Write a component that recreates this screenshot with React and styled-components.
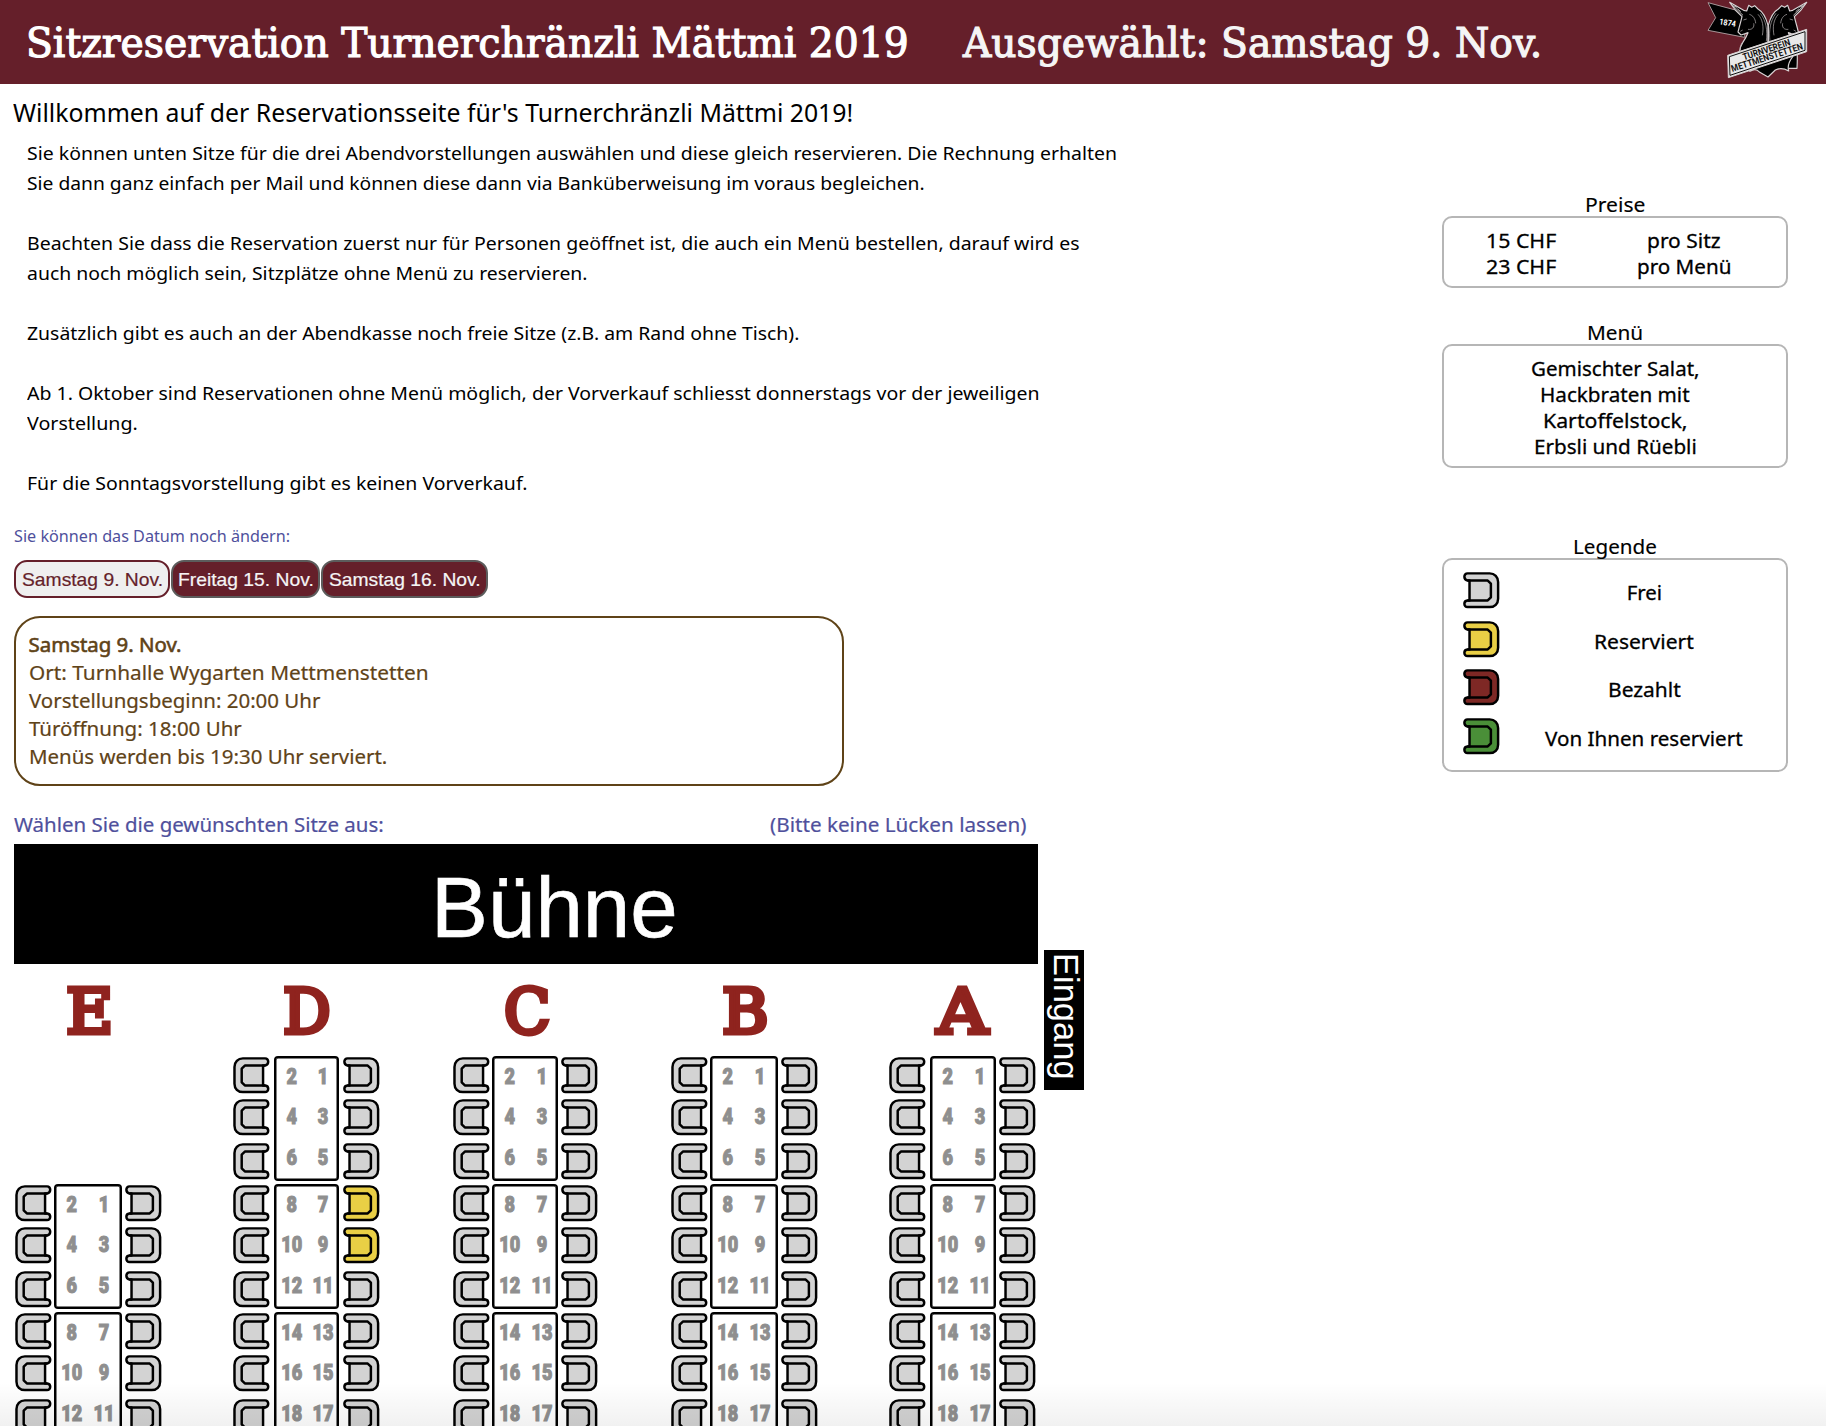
import React, { useLayoutEffect, useRef, useState } from 'react';
import styled, { createGlobalStyle } from 'styled-components';

const UI = '"Noto Sans", "Open Sans", sans-serif';
const SLAB = '"DejaVu Serif Condensed", "DejaVu Serif", serif';
const ARIAL = '"Liberation Sans", Arial, sans-serif';

const GlobalStyle = createGlobalStyle`
  *, *::before, *::after { box-sizing: border-box; }
  html, body { margin: 0; padding: 0; background: #fff; }
  body { font-family: ${UI}; color: #000; overflow: hidden; }
`;

/* ---------- text that fills a given width ---------- */

const FitBox = styled.span`
  display: inline-block;
  width: ${(p) => p.$w}px;
  white-space: nowrap;
  text-align: left;
  vertical-align: top;
`;

const FitInner = styled.span`
  display: inline-block;
  transform-origin: 0 50%;
`;

function Fit({ w, children }) {
  const ref = useRef(null);
  const [scale, setScale] = useState(1);
  useLayoutEffect(() => {
    const natural = ref.current.offsetWidth;
    if (natural) setScale(w / natural);
  }, [w]);
  return (
    <FitBox $w={w}>
      <FitInner ref={ref} style={{ transform: `scaleX(${scale})` }}>{children}</FitInner>
    </FitBox>
  );
}

/* ---------- page ---------- */

const Page = styled.div`
  position: relative;
  width: 1826px;
  height: 1426px;
  overflow: hidden;
  background: #fff;
`;

const BottomShade = styled.div`
  position: absolute;
  left: 0;
  right: 0;
  bottom: 0;
  height: 44px;
  background: linear-gradient(to bottom, rgba(0, 0, 0, 0), rgba(0, 0, 0, 0.055));
  pointer-events: none;
`;

const Header = styled.header`
  display: flex;
  align-items: flex-start;
  height: 84px;
  padding: 0 17px 0 26px;
  background: #651f2a;
  color: #fff;
`;

const Title = styled.h1`
  margin: 0;
  font: 400 41.4px/87px ${SLAB};
  -webkit-text-stroke: 1.1px currentColor;
`;

const Selected = styled(Title).attrs({ as: 'h2' })`
  margin-left: 54px;
  color: #f5f5f5;
`;

const LogoSlot = styled.div`
  margin-left: auto;
  height: 80px;
  line-height: 0;
`;

const Main = styled.main`
  display: flex;
  padding-left: 14px;
`;

const Content = styled.div`
  width: 1428px;
  padding-top: 10px;
`;

const Headline = styled.h2`
  margin: 0 0 0 -1px;
  font: 400 25px/36px ${UI};
`;

const Intro = styled.div`
  margin: 8px 0 0 12.5px;
  font-size: 18.8px;
  line-height: 30px;
`;

const Paragraph = styled.div`
  display: flex;
  flex-direction: column;
  & + & { margin-top: 30px; }
`;

const DateHint = styled.div`
  margin: 26px 0 0 -0.5px;
  font-size: 16px;
  line-height: 24px;
  color: #4f509c;
`;

const DateButtons = styled.div`
  display: flex;
  gap: 1px;
  margin-top: 12px;
`;

const DateButton = styled.button`
  width: ${(p) => p.$width}px;
  height: 38px;
  padding: 0;
  border: 2px solid ${(p) => (p.$active ? '#651f2a' : '#5c5c5c')};
  border-radius: 13px;
  background: ${(p) => (p.$active ? '#efefef' : '#651f2a')};
  color: ${(p) => (p.$active ? '#651f2a' : '#f5f5f5')};
  font: 400 19px/35px ${ARIAL};
  -webkit-text-stroke: 0.2px currentColor;
`;

const InfoBox = styled.section`
  display: flex;
  flex-direction: column;
  width: 830px;
  height: 170px;
  margin-top: 18px;
  padding: 12px 0 0 12.5px;
  border: 2px solid #5f4318;
  border-radius: 26px;
  color: #5f4318;
  font-size: 20.4px;
  line-height: 28px;
`;

const InfoLine = styled.span`
  -webkit-text-stroke: ${(p) => (p.$strong ? 0.6 : 0.2)}px currentColor;
`;

const SeatHint = styled.div`
  display: flex;
  justify-content: space-between;
  width: 1013px;
  margin: 24px 0 0 -0.5px;
  font-size: 20.2px;
  line-height: 28px;
  color: #4f509c;
  -webkit-text-stroke: 0.2px currentColor;
`;

/* ---------- hall ---------- */

const HallRow = styled.div`
  display: flex;
  align-items: flex-start;
  margin-top: 6px;
`;

const Hall = styled.div`
  width: 1024px;
`;

const Stage = styled.div`
  height: 120px;
  padding-left: 417px;
  background: #000;
  color: #fff;
  font: 400 85px/128px ${ARIAL};
  -webkit-text-stroke: 0.6px currentColor;
`;

const Entrance = styled.div`
  width: 40px;
  height: 140px;
  margin: 106px 0 0 6px;
  padding-top: 3px;
  background: #000;
  color: #fff;
  writing-mode: vertical-rl;
  font: 400 34.5px/37px ${ARIAL};
`;

const Columns = styled.div`
  display: grid;
  grid-template-columns: 219.3px 220.2px 218px 217.5px 149px;
`;

const Column = styled.div`
  width: 146px;
  margin-left: ${(p) => p.$inset || 0}px;
`;

const ColumnLetter = styled.div`
  height: 92px;
  margin-bottom: ${(p) => (p.$short ? 128 : 0)}px;
  padding-left: 2px;
  text-align: center;
  color: #8f231e;
  font: 400 62px/95px "DejaVu Serif", serif;
  -webkit-text-stroke: 4.8px currentColor;
`;

const Block = styled.div`
  display: grid;
  grid-template-columns: 36.6px ${(p) => p.$table}px 36.6px;
  column-gap: 0;
  height: 124px;
  margin-bottom: 4px;
`;

const SeatStack = styled.div`
  display: grid;
  grid-template-rows: 42px 44px 37px;
  padding-top: 1px;
  transform: ${(p) => (p.$flip ? 'scaleX(-1)' : 'none')};
`;

const Table = styled.div`
  display: grid;
  grid-template-columns: 31.5px 32px;
  grid-auto-rows: 40.3px;
  margin: 0 ${(p) => p.$gapRight}px 0 ${(p) => p.$gapLeft}px;
  border: 2px solid #000;
  border-radius: 4px;
  background: #fff;
  box-shadow: inset 0 0 0 0.5px #000;
`;

const SeatNumber = styled.div`
  display: flex;
  justify-content: center;
  line-height: 38px;
  font-family: Roboto, sans-serif;
  font-weight: 900;
  font-size: 22.6px;
  color: #8f8f8f;
  -webkit-text-stroke: 1.1px currentColor;
  transform: scaleX(0.8);
`;

const SeatSvg = styled.svg`
  display: block;
  width: 36.6px;
  height: 36.6px;
  overflow: visible;
`;

function Seat({ color = '#d3d3d3' }) {
  return (
    <SeatSvg viewBox="0 0 37 37" fill="none" stroke="#000" strokeWidth="2.5" strokeLinejoin="round">
      <path
        fill={color}
        d="M4.6 1.4H27C32 1.4 35.5 5 35.5 10V27C35.5 32 32 35.5 27 35.5H4.6C2.6 35.5 1.4 34.1 1.4 32.2C1.4 30.4 2.6 29 4.4 28.8H6.6V8.5H4.4C2.6 8.2 1.4 6.8 1.4 4.9C1.4 2.9 2.6 1.4 4.6 1.4Z"
      />
      <path d="M4.4 8.7H25L28.2 11.8V25.6L25 28.8H4.4" />
    </SeatSvg>
  );
}

const YELLOW = '#e9cf45';

const COLUMNS = [
  { id: 'E', letter: 47, inset: 1.3, short: true, table: 73, gl: 2.5, gr: 3 },
  { id: 'D', letter: 48, table: 72.7, gl: 4, gr: 3.2, reserved: [7, 9] },
  { id: 'C', letter: 46, table: 71, gl: 2.2, gr: 3.4 },
  { id: 'B', letter: 47, table: 73, gl: 2.4, gr: 3.4 },
  { id: 'A', letter: 51, table: 73.4, gl: 4.6, gr: 3.4 },
];

function SeatBlock({ col, first }) {
  const rows = [first, first + 2, first + 4];
  return (
    <Block $table={col.table}>
      <SeatStack $flip>
        {rows.map((n) => <Seat key={n} />)}
      </SeatStack>
      <Table $gapLeft={col.gl} $gapRight={col.gr}>
        {rows.map((n) => (
          <React.Fragment key={n}>
            <SeatNumber>{n + 1}</SeatNumber>
            <SeatNumber>{n}</SeatNumber>
          </React.Fragment>
        ))}
      </Table>
      <SeatStack>
        {rows.map((n) => (
          <Seat key={n} color={(col.reserved || []).includes(n) ? YELLOW : undefined} />
        ))}
      </SeatStack>
    </Block>
  );
}

/* ---------- sidebar ---------- */

const Sidebar = styled.aside`
  width: 346px;
  padding-top: 108px;
`;

const CardTitle = styled.div`
  margin-top: ${(p) => p.$space || 0}px;
  text-align: center;
  font-size: 20.4px;
  line-height: 24px;
  -webkit-text-stroke: 0.15px currentColor;
`;

const Card = styled.div`
  height: ${(p) => p.$height}px;
  padding-top: 9px;
  border: 2px solid #b6b6b6;
  border-radius: 10px;
  font-size: 20.4px;
  line-height: 26px;
  text-align: center;
  -webkit-text-stroke: 0.3px currentColor;
`;

const PriceRow = styled.div`
  display: grid;
  grid-template-columns: 154px 172px;
`;

const MenuLine = styled.div`
  height: 26px;
`;

const LegendRow = styled.div`
  display: grid;
  grid-template-columns: 37px 1fr;
  column-gap: 3px;
  height: 48.6px;
  padding: 3px 0 0 18.5px;
  line-height: 40px;
`;

const LEGEND = [
  ['Frei', '#d3d3d3', 35],
  ['Reserviert', YELLOW, 100],
  ['Bezahlt', '#7e2825', 73],
  ['Von Ihnen reserviert', '#4a8f38', 198],
];

/* ---------- logo ---------- */

function Unicorn() {
  return (
    <g>
      <path
        d="M121 7L163 31L172 33L178 16L187 22L196 17L206 27C222 36 230 52 236 76V205H150C148 168 148 145 160 128C168 116 172 108 176 98L168 101L155 105L146 96L149 84L155 62L158 50L138 30Z"
        fill="#000" stroke="#d9d3d4" strokeWidth="3.5" strokeLinejoin="round"
      />
      <path d="M122 9L161 46M132 17L143 22M144 26L154 35" stroke="#d9d3d4" strokeWidth="2.5" />
      <path d="M180 43C190 46 198 55 199 70M206 43C220 58 224 80 219 106M213 40C230 62 235 90 231 124M176 88C188 90 196 82 193 70M158 128C154 135 153 142 153 150M162 60L172 57M153 94L160 90" fill="none" stroke="#bdb7b8" strokeWidth="2" />
    </g>
  );
}

function Logo() {
  return (
    <svg width="102.7" height="80" viewBox="50 0 308 240">
      <path d="M56 8L168 38L166 112L56 91L79 53Z" fill="#000" stroke="#b9aeb0" strokeWidth="2.5" />
      <text x="115" y="77" textAnchor="middle" transform="rotate(9 115 68)" fontFamily="Roboto, sans-serif" fontWeight="700" fontSize="25" fill="#fff" textLength="50" lengthAdjust="spacingAndGlyphs">1874</text>
      <Unicorn />
      <g transform="translate(473 0) scale(-1 1)"><Unicorn /></g>
      <path d="M226 40L236 62L246 40L238 28H233Z" fill="#651f2a" />
      <path d="M168 196L182 214C194 206 204 208 210 216L236 231L258 210C270 204 286 206 298 213C294 200 298 186 310 170L300 130Z" fill="#000" stroke="#d9d3d4" strokeWidth="3.5" strokeLinejoin="round" />
      <path d="M115 166L352 88V155L117 233Z" fill="#e9e9e9" stroke="#d9d3d4" strokeWidth="3" />
      <path d="M120 170L347 95V151L122 226Z" fill="#e9e9e9" stroke="#111" strokeWidth="3" />
      <g fontFamily="Roboto, sans-serif" fontWeight="700" fill="#111">
        <text transform="translate(164 181) rotate(-18)" fontSize="28" textLength="148" lengthAdjust="spacingAndGlyphs">TURNVEREIN</text>
        <text transform="translate(129 216) rotate(-18)" fontSize="28" textLength="224" lengthAdjust="spacingAndGlyphs">METTMENSTETTEN</text>
      </g>
    </svg>
  );
}

/* ---------- texts ---------- */

const INTRO = [
  [
    ['Sie können unten Sitze für die drei Abendvorstellungen auswählen und diese gleich reservieren. Die Rechnung erhalten', 1090],
    ['Sie dann ganz einfach per Mail und können diese dann via Banküberweisung im voraus begleichen.', 898],
  ],
  [
    ['Beachten Sie dass die Reservation zuerst nur für Personen geöffnet ist, die auch ein Menü bestellen, darauf wird es', 1053],
    ['auch noch möglich sein, Sitzplätze ohne Menü zu reservieren.', 561],
  ],
  [['Zusätzlich gibt es auch an der Abendkasse noch freie Sitze (z.B. am Rand ohne Tisch).', 772]],
  [
    ['Ab 1. Oktober sind Reservationen ohne Menü möglich, der Vorverkauf schliesst donnerstags vor der jeweiligen', 1012],
    ['Vorstellung.', 111],
  ],
  [['Für die Sonntagsvorstellung gibt es keinen Vorverkauf.', 500]],
];

const INFO = [
  ['Samstag 9. Nov.', 153],
  ['Ort: Turnhalle Wygarten Mettmenstetten', 400],
  ['Vorstellungsbeginn: 20:00 Uhr', 291],
  ['Türöffnung: 18:00 Uhr', 213],
  ['Menüs werden bis 19:30 Uhr serviert.', 358],
];

const MENU = [
  ['Gemischter Salat,', 169],
  ['Hackbraten mit', 150],
  ['Kartoffelstock,', 145],
  ['Erbsli und Rüebli', 163],
];

export default function App() {
  return (
    <Page>
      <GlobalStyle />
      <Header>
        <Title><Fit w={883}>Sitzreservation Turnerchränzli Mättmi 2019</Fit></Title>
        <Selected><Fit w={579}>Ausgewählt: Samstag 9. Nov.</Fit></Selected>
        <LogoSlot><Logo /></LogoSlot>
      </Header>
      <Main>
        <Content>
          <Headline><Fit w={840}>Willkommen auf der Reservationsseite für's Turnerchränzli Mättmi 2019!</Fit></Headline>
          <Intro>
            {INTRO.map((lines, i) => (
              <Paragraph key={i}>
                {lines.map(([text, w]) => <Fit key={text} w={w}>{text}</Fit>)}
              </Paragraph>
            ))}
          </Intro>
          <DateHint><Fit w={276}>Sie können das Datum noch ändern:</Fit></DateHint>
          <DateButtons>
            <DateButton $active $width={156}><Fit w={141}>Samstag 9. Nov.</Fit></DateButton>
            <DateButton $width={149}><Fit w={136}>Freitag 15. Nov.</Fit></DateButton>
            <DateButton $width={167}><Fit w={152}>Samstag 16. Nov.</Fit></DateButton>
          </DateButtons>
          <InfoBox>
            {INFO.map(([text, w], i) => (
              <InfoLine key={text} $strong={i === 0}><Fit w={w}>{text}</Fit></InfoLine>
            ))}
          </InfoBox>
          <SeatHint>
            <Fit w={370}>Wählen Sie die gewünschten Sitze aus:</Fit>
            <Fit w={257}>(Bitte keine Lücken lassen)</Fit>
          </SeatHint>
          <HallRow>
            <Hall>
              <Stage><Fit w={247}>Bühne</Fit></Stage>
              <Columns>
                {COLUMNS.map((col) => (
                  <Column key={col.id} $inset={col.inset}>
                    <ColumnLetter $short={col.short}><Fit w={col.letter}>{col.id}</Fit></ColumnLetter>
                    {(col.short ? [1, 7] : [1, 7, 13]).map((n) => (
                      <SeatBlock key={n} col={col} first={n} />
                    ))}
                  </Column>
                ))}
              </Columns>
            </Hall>
            <Entrance>Eingang</Entrance>
          </HallRow>
        </Content>
        <Sidebar>
          <CardTitle><Fit w={60}>Preise</Fit></CardTitle>
          <Card $height={72}>
            <PriceRow>
              <span><Fit w={70}>15 CHF</Fit></span>
              <span><Fit w={74}>pro Sitz</Fit></span>
            </PriceRow>
            <PriceRow>
              <span><Fit w={70}>23 CHF</Fit></span>
              <span><Fit w={94}>pro Menü</Fit></span>
            </PriceRow>
          </Card>
          <CardTitle $space={32}><Fit w={56}>Menü</Fit></CardTitle>
          <Card $height={124}>
            {MENU.map(([text, w]) => <MenuLine key={text}><Fit w={w}>{text}</Fit></MenuLine>)}
          </Card>
          <CardTitle $space={66}><Fit w={84}>Legende</Fit></CardTitle>
          <Card $height={214}>
            {LEGEND.map(([text, color, w]) => (
              <LegendRow key={text}>
                <Seat color={color} />
                <span><Fit w={w}>{text}</Fit></span>
              </LegendRow>
            ))}
          </Card>
        </Sidebar>
      </Main>
      <BottomShade />
    </Page>
  );
}
